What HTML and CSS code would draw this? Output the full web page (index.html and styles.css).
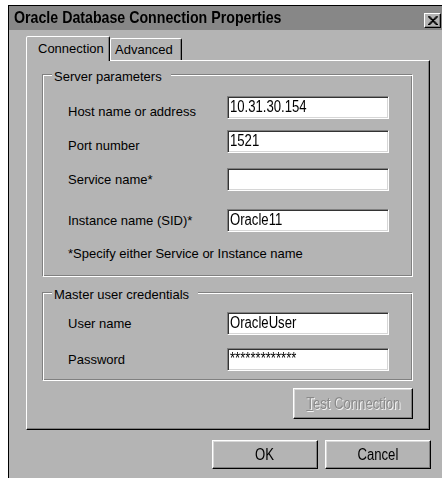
FILE: index.html
```html
<!DOCTYPE html>
<html lang="en">
<head>
<meta charset="utf-8">
<title>Oracle Database Connection Properties</title>
<link rel="stylesheet" href="styles.css">
</head>
<body>
<div class="window">
  <div class="titlebar">
    <span class="title"><span class="narrow narrow--left narrow--title">Oracle Database Connection Properties</span></span>
    <button class="close" type="button" aria-label="Close">
      <svg width="10" height="9" viewBox="0 0 8 7" aria-hidden="true"><path d="M0 0h2v1H0zM6 0h2v1H6zM1 1h2v1H1zM5 1h2v1H5zM2 2h4v1H2zM3 3h2v1H3zM2 4h4v1H2zM1 5h2v1H1zM5 5h2v1H5zM0 6h2v1H0zM6 6h2v1H6z" fill="#000"/></svg>
    </button>
  </div>
  <div class="client">
    <div class="tabs">
      <div class="tab tab--active">Connection</div>
      <div class="tab">Advanced</div>
    </div>
    <div class="page">
      <div class="group group--server">
        <span class="legend">Server parameters</span>
        <div class="form form--server">
          <span class="label label--low">Host name or address</span>
          <span class="field" role="textbox"><span class="narrow narrow--left">10.31.30.154</span></span>
          <span class="label label--low">Port number</span>
          <span class="field" role="textbox"><span class="narrow narrow--left">1521</span></span>
          <span class="label">Service name*</span>
          <span class="field" role="textbox"></span>
          <span class="label">Instance name (SID)*</span>
          <span class="field" role="textbox"><span class="narrow narrow--left">Oracle11</span></span>
          <p class="note">*Specify either Service or Instance name</p>
        </div>
      </div>
      <div class="group group--creds">
        <span class="legend">Master user credentials</span>
        <div class="form form--creds">
          <span class="label">User name</span>
          <span class="field" role="textbox"><span class="narrow narrow--left">OracleUser</span></span>
          <span class="label">Password</span>
          <span class="field" role="textbox"><span class="narrow narrow--left">*************</span></span>
        </div>
      </div>
      <div class="page-actions">
        <button class="btn btn--test" type="button" disabled><span class="narrow"><u>T</u>est Connection</span></button>
      </div>
    </div>
    <div class="actions">
      <button class="btn btn--dialog" type="button"><span class="narrow">OK</span></button>
      <button class="btn btn--dialog" type="button"><span class="narrow">Cancel</span></button>
    </div>
  </div>
</div>
</body>
</html>
```
FILE: styles.css
```css
html, body {
  margin: 0;
  background: #fff;
}

body {
  width: 442px;
  height: 478px;
  overflow: hidden;
}

.window {
  margin: 5px 0 0 8px;
  width: 440px;
  height: 480px;
  border-top: 1px solid #000;
  border-left: 1px solid #000;
  background: #b4b4b4;
  color: #000;
  font: 13px/15px "Liberation Sans", Arial, sans-serif;
}

/* condensed face: Arial squeezed to narrow proportions */
.narrow {
  display: inline-block;
  white-space: nowrap;
  transform: scaleX(0.82);
}

.narrow--left {
  transform-origin: 0 50%;
}

.narrow--title {
  transform: scaleX(0.835);
}

/* caption bar */
.titlebar {
  display: flex;
  align-items: center;
  height: 24px;
  padding-left: 5px;
  background: #878787;
}

.title {
  font: bold 17px/24px "Liberation Sans", Arial, sans-serif;
  white-space: nowrap;
}

.close {
  display: flex;
  align-items: center;
  justify-content: center;
  align-self: flex-end;
  margin: 0 8px 2px auto;
  width: 17px;
  height: 15px;
  padding: 0;
  box-sizing: border-box;
  background: #b4b4b4;
  border: 1px solid;
  border-color: #fff #000 #000 #fff;
  box-shadow: inset -1px -1px 0 #808080;
}

.client {
  padding: 6px 0 0 17px;
}

/* tab strip */
.tabs {
  display: flex;
  align-items: flex-end;
  height: 24px;
}

.tab {
  box-sizing: border-box;
  width: 72px;
  height: 22px;
  padding: 3px 4px 0 4px;
  border: 1px solid;
  border-bottom: 0;
  border-color: #fff #000 transparent #fff;
  border-radius: 2px 2px 0 0;
  box-shadow: inset -1px 0 0 #808080;
  white-space: nowrap;
}

.tab--active {
  position: relative;
  z-index: 1;
  width: 84px;
  height: 25px;
  margin-bottom: -1px;
  padding: 4px 0 0 11px;
  background: #b4b4b4;
}

/* tab page */
.page {
  box-sizing: border-box;
  width: 404px;
  padding: 13px 16px 10px 15px;
  border: 1px solid;
  border-color: #fff #000 #000 #fff;
  box-shadow: inset -1px -1px 0 #808080;
}

.group {
  position: relative;
  border: 1px solid;
  border-color: #808080 #fff #fff #808080;
  box-shadow: inset 1px 1px 0 #fff, inset -1px -1px 0 #808080;
}

.group--server {
  padding: 21px 0 15px 25px;
}

.group--creds {
  margin-top: 15px;
  padding: 19px 0 9px 25px;
}

.legend {
  position: absolute;
  top: -6px;
  left: 9px;
  padding: 0 9px 0 2px;
  background: #b4b4b4;
  white-space: nowrap;
}

.form {
  display: grid;
  grid-template-columns: 159px 162px;
}

.form--server {
  grid-template-rows: 34px 38px 41px 37px auto;
}

.form--creds {
  grid-template-rows: 36px auto;
}

.label {
  align-self: start;
  margin-top: 4px;
  white-space: nowrap;
}

.label--low {
  margin-top: 8px;
}

.note {
  grid-column: 1 / -1;
  margin: 0;
  white-space: nowrap;
}

/* sunken edit box */
.field {
  display: block;
  align-self: start;
  box-sizing: border-box;
  width: 162px;
  height: 23px;
  padding: 0 2px;
  border: 1px solid;
  border-color: #808080 #fff #fff #808080;
  box-shadow: inset 1px 1px 0 #333, inset -1px -1px 0 #d6d6d6;
  background: #fff;
  color: #000;
  font: 16px/20px "Liberation Sans", Arial, sans-serif;
  overflow: hidden;
}

/* push buttons */
.btn {
  box-sizing: border-box;
  padding: 0;
  background: #b4b4b4;
  border: 1px solid;
  border-color: #fff #000 #000 #fff;
  box-shadow: inset -1px -1px 0 #808080, inset 1px 1px 0 #d8d8d8;
  color: #000;
  font: 16px/18px "Liberation Sans", Arial, sans-serif;
}

.page-actions {
  display: flex;
  justify-content: flex-end;
  margin-top: 7px;
}

.btn--test {
  width: 120px;
  height: 31px;
  color: #8a8a8a;
  text-shadow: 1px 1px 0 #f4f4f4;
}

.actions {
  display: flex;
  justify-content: flex-end;
  gap: 7px;
  width: 405px;
  margin-top: 10px;
}

.btn--dialog {
  width: 106px;
  height: 29px;
}
```
